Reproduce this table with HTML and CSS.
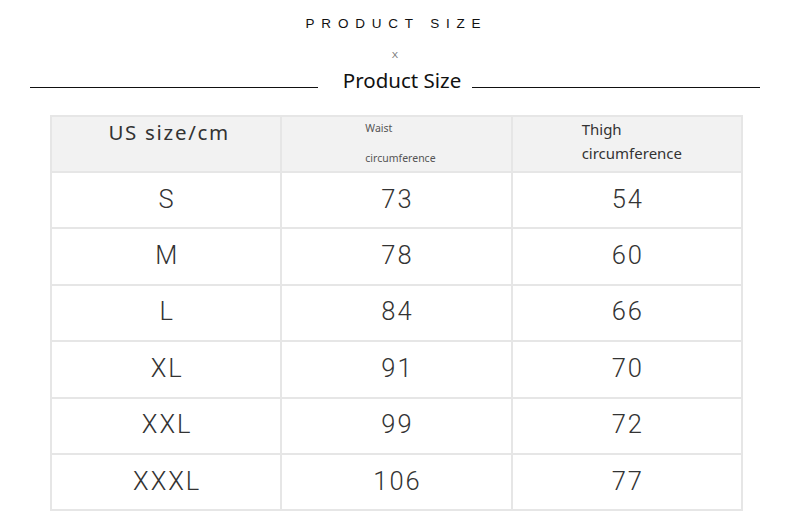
FILE: index.html
```html
<!DOCTYPE html>
<html>
<head>
<meta charset="utf-8">
<link rel="stylesheet" href="styles.css">
</head>
<body>
<div class="page">
  <div class="title">PRODUCT SIZE</div>
  <div class="x">X</div>
  <div class="subtitle-row">
    <span class="rule"></span>
    <span class="subtitle">Product Size</span>
    <span class="rule"></span>
  </div>
  <table class="sizes">
    <thead>
      <tr>
        <th class="h-us">US size/cm</th>
        <th class="h-waist"><span class="l1">Waist</span><span class="l2">circumference</span></th>
        <th class="h-thigh"><span class="l1">Thigh</span><span class="l2">circumference</span></th>
      </tr>
    </thead>
    <tbody>
      <tr><td>S</td><td>73</td><td>54</td></tr>
      <tr><td>M</td><td>78</td><td>60</td></tr>
      <tr><td>L</td><td>84</td><td>66</td></tr>
      <tr><td>XL</td><td>91</td><td>70</td></tr>
      <tr><td>XXL</td><td>99</td><td>72</td></tr>
      <tr><td>XXXL</td><td>106</td><td>77</td></tr>
    </tbody>
  </table>
</div>
</body>
</html>
```
FILE: styles.css
```css
html, body {
  margin: 0;
  padding: 0;
  background: #ffffff;
}
.page {
  width: 790px;
  height: 526px;
  overflow: hidden;
}
.title {
  font-family: "Liberation Sans", Arial, sans-serif;
  font-size: 13.5px;
  letter-spacing: 6.8px;
  padding-left: 3px;
  color: #111;
  text-align: center;
  line-height: 16px;
  padding-top: 16px;
  height: 16px;
}
.x {
  font-family: "Liberation Sans", Arial, sans-serif;
  font-size: 9.5px;
  color: #777;
  text-align: center;
  line-height: 10px;
  margin-top: 18px;
  height: 10px;
}
.subtitle-row {
  display: flex;
  align-items: center;
  padding: 0 30px;
  margin-top: 5px;
  height: 30px;
}
.rule {
  flex: 1;
  height: 1.5px;
  background: #111;
  margin-top: 15px;
}
.subtitle {
  font-family: "Noto Sans", "Open Sans", sans-serif;
  font-size: 20.5px;
  color: #111;
  line-height: 30px;
  margin: 0 11px 0 25px;
}
.sizes {
  margin: 20px 0 0 50px;
  width: 693px;
  border-collapse: collapse;
  table-layout: fixed;
  border: 2px solid #e4e4e4;
}
.sizes th, .sizes td {
  border: 2px solid #e6e6e6;
  padding: 0;
  text-align: center;
}
.sizes thead tr {
  height: 56px;
}
.sizes th {
  background: #f2f2f2;
  font-weight: normal;
  vertical-align: top;
  color: #333;
  font-family: "Noto Sans", "Open Sans", sans-serif;
}
.h-us {
  font-size: 20.5px;
  letter-spacing: 1.7px;
  line-height: 30px;
  padding: 0 0 0 6px !important;
}
.h-waist {
  text-align: left !important;
  padding-left: 83px !important;
  font-size: 10.5px;
  color: #555 !important;
}
.h-waist .l1 {
  display: block;
  line-height: 14px;
  margin-top: 4px;
}
.h-waist .l2 {
  display: block;
  line-height: 14px;
  margin-top: 16px;
}
.h-thigh {
  text-align: left !important;
  padding-left: 69px !important;
  font-size: 15px;
}
.h-thigh .l1 {
  display: block;
  line-height: 24px;
  margin-top: 0;
}
.h-thigh .l2 {
  display: block;
  line-height: 24px;
}
.sizes tbody tr {
  height: 56.4px;
}
.sizes td {
  font-family: Roboto, "Liberation Sans", Arial, sans-serif;
  font-weight: 300;
  font-size: 25.5px;
  letter-spacing: 2px;
  padding: 0 0 3px 2px;
  color: #333;
}
```
